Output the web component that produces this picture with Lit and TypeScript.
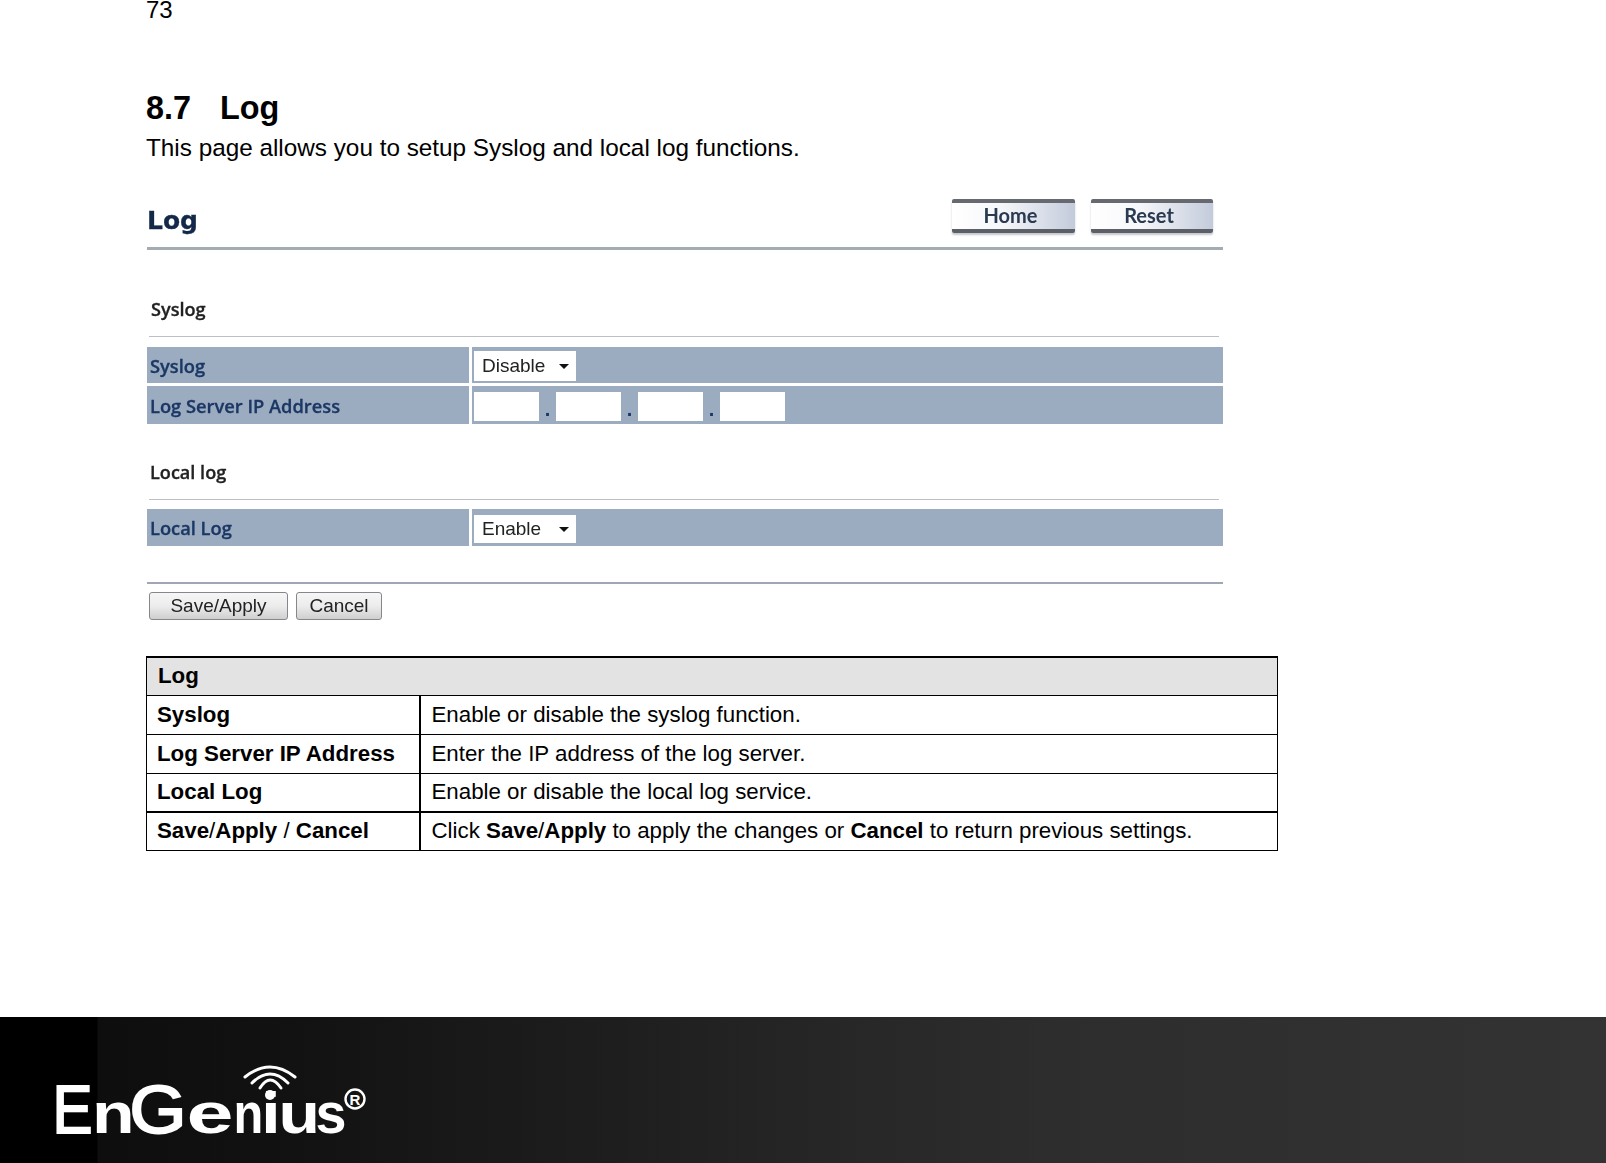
import { LitElement, html, css, svg } from "lit";
import { customElement } from "lit/decorators.js";

const LETTERS: [string, number, number, string][] = [
  ["E", 52.5, 40, "c"],
  ["n", 92, 42.6, "l"],
  ["G", 129.4, 57, "c"],
  ["e", 186.6, 47, "l"],
  ["n", 233.6, 29.8, "l"],
  ["i", 261, 19.8, "l"],
  ["u", 278.5, 41.5, "l"],
  ["s", 315.4, 31, "l"],
];

@customElement("app-root")
export class AppRoot extends LitElement {
  static styles = css`
    :host { display: block; width: 1606px; height: 1163px; background: #fff; font-family: "Liberation Sans", Arial, sans-serif; color: #000; overflow: hidden; }
    .page { height: 1163px; display: flex; flex-direction: column; }
    .main { flex: 1; min-height: 0; padding-left: 146px; }
    .pn { font-size: 24px; line-height: 20px; }
    h1 { margin: 72px 0 0; font-size: 32.4px; line-height: 32px; font-weight: 700; display: flex; }
    h1 span:first-child { width: 74px; }
    .intro { margin: 12px 0 0; font-size: 24.3px; line-height: 24px; }

    .shot { margin: 39px 0 0 1px; width: 1076px; filter: blur(0.4px); font-family: "DejaVu Sans", sans-serif; }
    .top { height: 48px; border-bottom: 3px solid #a3abb3; display: flex; align-items: flex-start; justify-content: space-between; padding-right: 10px; }
    .title { font-size: 25px; font-weight: 700; line-height: 28px; color: #14294a; margin-top: 8px; -webkit-text-stroke: 0.3px #14294a; }
    .navs { display: flex; gap: 16px; }
    .nav { height: 34px; box-sizing: border-box; border-top: 4px solid #666a70; border-bottom: 4px solid #5c6066; border-radius: 2px; background: linear-gradient(90deg, #fff 0%, #f6f7fa 40%, #c3cbdb 100%); box-shadow: 0 2px 2px #c5c8cc; display: flex; align-items: center; justify-content: center; color: #2a3a50; font-size: 20px; font-weight: 700; font-family: "Lato", sans-serif; padding-bottom: 2px; }
    .nav.home { width: 123px; padding-right: 6px; }
    .nav.reset { width: 122px; padding-right: 6px; }
    .sec { box-sizing: border-box; margin: 0 4px 0 2px; border-bottom: 1px solid #bcc0c4; display: flex; align-items: flex-end; font-family: "Open Sans", sans-serif; font-size: 18.1px; font-weight: 600; line-height: 24px; color: #222; -webkit-text-stroke: 0.3px #222; }
    .sec.s1 { height: 87px; padding: 0 0 15px 2px; }
    .sec.s2 { height: 76px; padding: 0 0 15px 1px; }
    .row { display: grid; grid-template-columns: 322px 1fr; column-gap: 3px; margin-top: 10px; }
    .row.r2 { margin-top: 3px; }
    .row.r3 { margin-top: 9px; }
    .lab { background: #9babc0; color: #1b3764; font-family: "Open Sans", sans-serif; font-size: 18.3px; font-weight: 600; display: flex; align-items: center; padding-left: 3px; -webkit-text-stroke: 0.3px #1b3764; }
    .val { background: #9babc0; padding: 4px 0 0 2px; box-sizing: border-box; display: flex; align-items: flex-start; }
    .r1 { height: 36px; }
    .r2 { height: 38px; }
    .r3 { height: 37px; }
    .r2 .val { padding-top: 6px; }
    .r3 .val { padding-top: 6px; }
    .sel { width: 102px; height: 30px; box-sizing: border-box; background: #fff; display: flex; align-items: center; justify-content: space-between; padding: 0 7px 0 8px; font-family: "Liberation Sans", sans-serif; font-size: 19px; color: #222; }
    .r3 .sel { height: 28px; }
    .arrow { width: 0; height: 0; border-left: 5px solid transparent; border-right: 5px solid transparent; border-top: 5px solid #111; }
    input { width: 65px; height: 29px; box-sizing: border-box; border: 0; padding: 0; margin: 0; background: #fff; outline: none; }
    .dot { width: 17px; text-align: center; color: #1b3764; font-family: "Liberation Sans", sans-serif; font-size: 20px; font-weight: 700; line-height: 34px; height: 29px; }
    .rule { margin-top: 36px; height: 2px; background: #9fa7b5; }
    .acts { margin: 8px 0 0 2px; display: flex; gap: 8px; }
    button { height: 28px; box-sizing: border-box; border: 1px solid #84888c; border-radius: 3px; background: linear-gradient(#f6f6f6, #ececec 50%, #cfcfcf); font-family: "Liberation Sans", sans-serif; font-size: 19px; color: #222; padding: 0 0 0 0; }
    .save { width: 139px; }
    .cancel { width: 86px; }

    table { margin-top: 36px; width: 1132px; border-collapse: collapse; table-layout: fixed; font-size: 22.3px; line-height: 24px; }
    col.c1 { width: 273px; }
    td { border: 1px solid #000; padding: 0 0 0 11px; height: 39px; box-sizing: border-box; }
    td.k { border-right-width: 2px; font-weight: 700; padding-left: 10px; }
    th { background: #e3e3e3; border: 1px solid #000; border-top-width: 2px; text-align: left; font-weight: 700; padding: 0 0 0 11px; height: 38px; box-sizing: border-box; }
    tr.last td { border-top-width: 2px; height: 38px; }
    .reg { font-weight: 400; }
    .foot { height: 146px; flex: none; background: linear-gradient(90deg, #000 0, #000 97px, #0e0e0e 98px, #121212 300px, #171717 420px, #1f1f1f 640px, #272727 850px, #2d2d2d 1050px, #333 1606px); }
    .foot svg { display: block; }
    .lg { font-family: "Liberation Sans", sans-serif; fill: #fff; }
    .lg .c { font-size: 68px; font-weight: 400; stroke: #fff; stroke-width: 2px; }
    .lg .l { font-size: 57px; font-weight: 700; }
  `;

  render() {
    return html`<div class="page">
      <div class="main">
        <div class="pn">73</div>
        <h1><span>8.7</span><span>Log</span></h1>
        <p class="intro">This page allows you to setup Syslog and local log functions.</p>
        <div class="shot">
          <div class="top">
            <div class="title">Log</div>
            <div class="navs"><div class="nav home">Home</div><div class="nav reset">Reset</div></div>
          </div>
          <div class="sec s1">Syslog</div>
          <div class="row r1"><div class="lab">Syslog</div><div class="val"><div class="sel">Disable<span class="arrow"></span></div></div></div>
          <div class="row r2"><div class="lab">Log Server IP Address</div><div class="val"><input /><span class="dot">.</span><input /><span class="dot">.</span><input /><span class="dot">.</span><input /></div></div>
          <div class="sec s2">Local log</div>
          <div class="row r3"><div class="lab">Local Log</div><div class="val"><div class="sel">Enable<span class="arrow"></span></div></div></div>
          <div class="rule"></div>
          <div class="acts"><button class="save">Save/Apply</button><button class="cancel">Cancel</button></div>
        </div>
        <table>
          <colgroup><col class="c1" /><col /></colgroup>
          <tr><th colspan="2">Log</th></tr>
          <tr><td class="k">Syslog</td><td>Enable or disable the syslog function.</td></tr>
          <tr><td class="k">Log Server IP Address</td><td>Enter the IP address of the log server.</td></tr>
          <tr><td class="k">Local Log</td><td>Enable or disable the local log service.</td></tr>
          <tr class="last"><td class="k">Save<span class="reg">/</span>Apply <span class="reg">/</span> Cancel</td><td>Click <b>Save</b>/<b>Apply</b> to apply the changes or <b>Cancel</b> to return previous settings.</td></tr>
        </table>
      </div>
      <div class="foot">
        <svg width="400" height="146" viewBox="0 1017 400 146">
          <text class="lg" y="1133">${LETTERS.map(
            ([c, x, w, k]) => svg`<tspan class=${k} x=${x} textLength=${w} lengthAdjust="spacingAndGlyphs">${c}</tspan>`
          )}</text>
          <g fill="none" stroke="#fff" stroke-width="3" stroke-linecap="round">
            <path d="M245 1077Q270 1057 295 1077" />
            <path d="M252 1083Q270 1065 288 1083" />
            <path d="M260 1088Q270 1072 281 1088" />
          </g>
          <circle cx="270" cy="1095" r="5" fill="#fff" />
          <circle cx="355" cy="1099" r="9.5" fill="none" stroke="#fff" stroke-width="2.4" />
          <text class="lg" x="355" y="1105" font-size="15" font-weight="700" text-anchor="middle">R</text>
        </svg>
      </div>
    </div>`;
  }
}
